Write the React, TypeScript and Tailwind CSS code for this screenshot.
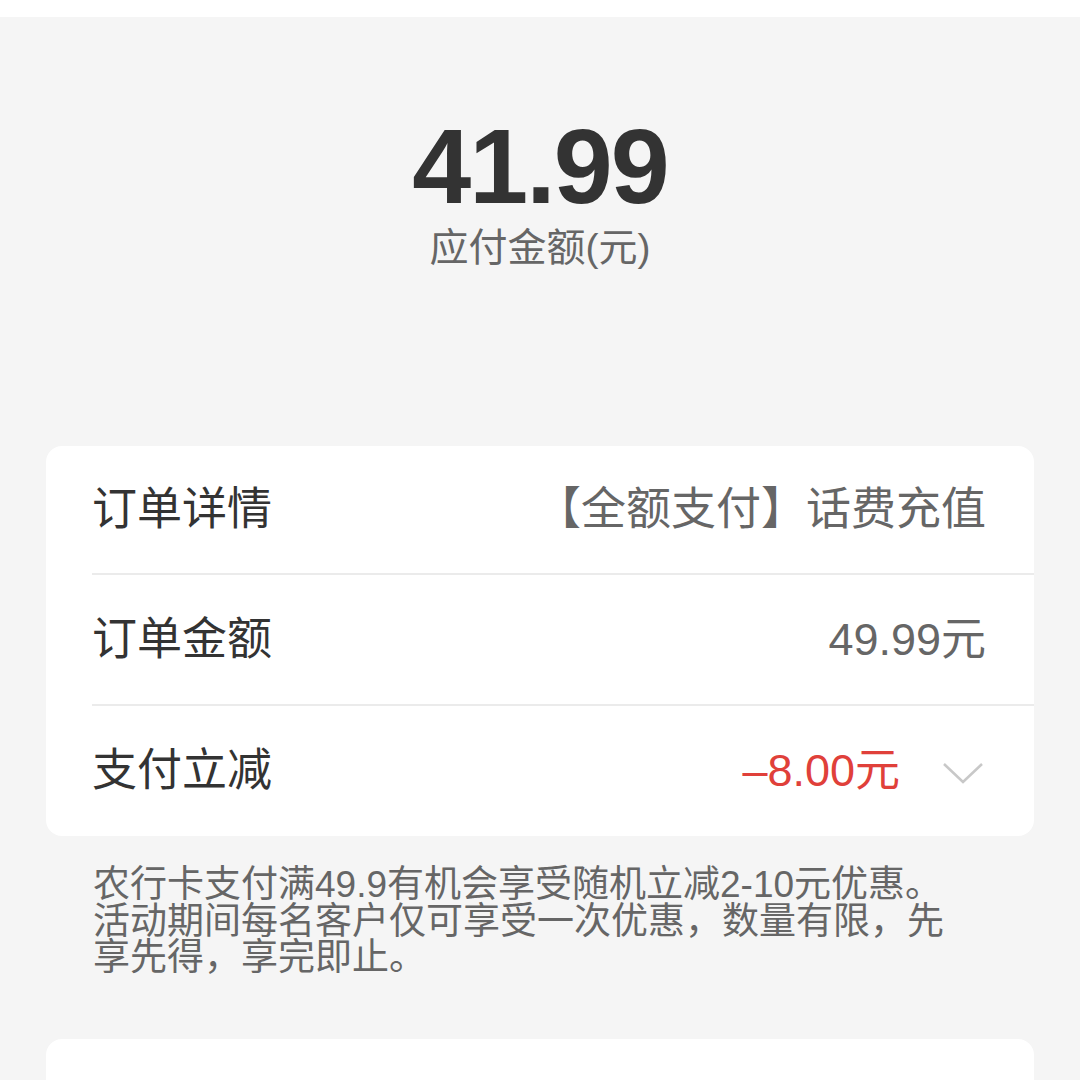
import React from "react";

const font = { fontFamily: '"Liberation Sans", "Noto Sans CJK SC", sans-serif' };

export default function App() {
  return (
    <div className="w-[1080px] h-[1080px] overflow-hidden bg-[#f5f5f5] flex flex-col" style={font}>
      <div className="h-[17px] bg-white shrink-0" />
      <div className="flex flex-col items-center pt-[89px]">
        <div className="text-[106px] leading-[120px] text-[#333] font-bold tracking-[-2px]">41.99</div>
        <div className="text-[39px] leading-[48px] text-[#666] mt-[-2px]">应付金额(元)</div>
      </div>
      <div className="mx-[46px] mt-[174px] bg-white rounded-[16px] flex flex-col shrink-0">
        <div className="h-[129px] ml-[46px] pr-[48px] flex items-center justify-between border-b-2 border-[#ebebeb]">
          <span className="text-[45px] text-[#333]">订单详情</span>
          <span className="text-[45px] text-[#666]">【全额支付】话费充值</span>
        </div>
        <div className="h-[131px] ml-[46px] pr-[48px] flex items-center justify-between border-b-2 border-[#ebebeb]">
          <span className="text-[45px] text-[#333]">订单金额</span>
          <span className="text-[45px] text-[#666]">49.99元</span>
        </div>
        <div className="h-[130px] ml-[46px] pr-[50px] flex items-center justify-between">
          <span className="text-[45px] text-[#333]">支付立减</span>
          <div className="flex items-center gap-[42px]">
            <span className="text-[45px] text-[#e0403a]">–8.00元</span>
            <svg width="42" height="24" viewBox="0 0 42 24" fill="none" className="mt-[4px]">
              <path d="M2 3 L21 21 L40 3" stroke="#c8c8c8" strokeWidth="2.5" />
            </svg>
          </div>
        </div>
      </div>
      <div className="ml-[93px] w-[862px] pt-[31px] text-[37px] leading-[36.5px] text-[#666]">
        农行卡支付满49.9有机会享受随机立减2-10元优惠。活动期间每名客户仅可享受一次优惠，数量有限，先享先得，享完即止。
      </div>
      <div className="mx-[46px] mt-[62px] bg-white rounded-[16px] h-[200px] shrink-0" />
    </div>
  );
}
